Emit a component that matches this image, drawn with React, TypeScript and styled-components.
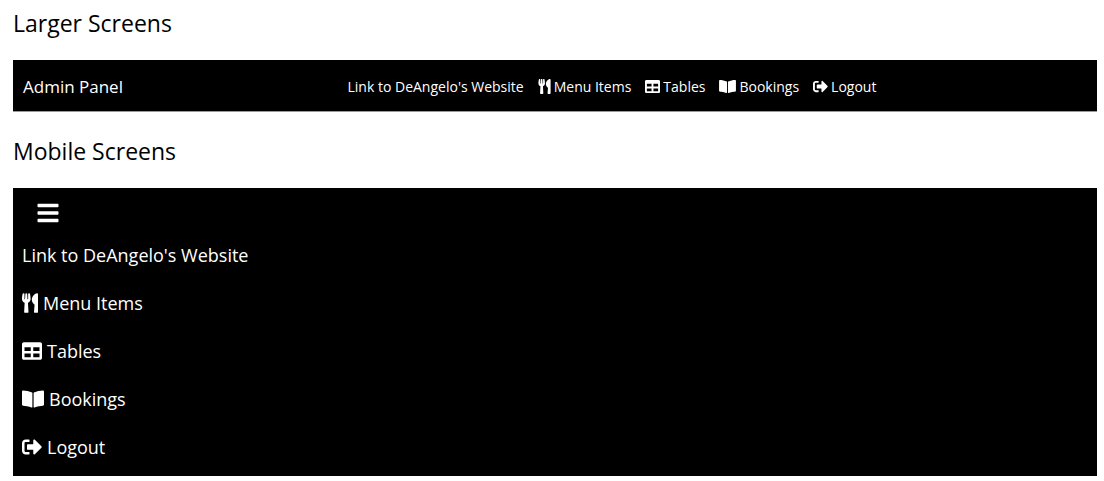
import React from "react";
import styled, { createGlobalStyle } from "styled-components";
import { FaBars, FaBookOpen, FaSignOutAlt, FaTable, FaUtensils } from "react-icons/fa";
import type { IconType } from "react-icons";

const GlobalStyle = createGlobalStyle`
  * { box-sizing: border-box; }
  body {
    margin: 0;
    background: #fff;
    color: #000;
    font-family: "Open Sans", "Noto Sans", sans-serif;
  }
`;

const Page = styled.main`
  padding: 8px 7px 5px 13px;
`;

const Heading = styled.h1`
  margin: 0 0 22px;
  font-size: 23px;
  line-height: 30px;
  font-weight: 400;
`;

const Bar = styled.nav`
  display: flex;
  align-items: center;
  min-height: 52px;
  margin-bottom: 24px;
  padding: 2px 0 0 10px;
  background: #000;
  border-bottom: 1px solid #999;
  color: #fff;
`;

const Brand = styled.a`
  color: #fff;
  font-size: 17px;
  line-height: 28px;
  text-decoration: none;
`;

const LinkRow = styled.ul`
  display: flex;
  flex: 1;
  flex-wrap: wrap;
  justify-content: center;
  gap: 14px;
  margin: 0;
  padding: 0 0 0 4px;
  list-style: none;
`;

const Drawer = styled.nav`
  padding: 10px 9px 15px;
  background: #000;
`;

const MenuButton = styled.button`
  display: flex;
  margin: 0 0 13px 11px;
  padding: 3px;
  border: 0;
  background: none;
  color: #fff;
  font-size: 24px;
  line-height: 24px;
`;

const LinkColumn = styled.ul`
  display: flex;
  flex-direction: column;
  gap: 20px;
  margin: 0;
  padding: 0;
  list-style: none;
`;

const NavLink = styled.a<{ $large?: boolean }>`
  display: flex;
  align-items: center;
  gap: ${(p) => (p.$large ? 5 : 3)}px;
  color: #fff;
  font-size: ${(p) => (p.$large ? 18 : 14)}px;
  line-height: ${(p) => (p.$large ? 28 : 20)}px;
  text-decoration: none;
  white-space: nowrap;
`;

type IconShape = "narrow" | "square" | "wide";

const iconWidths: Record<IconShape, { small: number; large: number }> = {
  narrow: { small: 13, large: 16 },
  square: { small: 15, large: 20 },
  wide: { small: 17, large: 22 },
};

const IconBox = styled.span<{ $shape: IconShape; $large?: boolean }>`
  display: flex;
  flex: none;
  width: ${(p) => iconWidths[p.$shape][p.$large ? "large" : "small"]}px;
  height: ${(p) => (p.$large ? 20 : 15)}px;

  svg {
    width: 100%;
    height: 100%;
  }
`;

const links: { label: string; icon?: IconType; shape?: IconShape }[] = [
  { label: "Link to DeAngelo's Website" },
  { label: "Menu Items", icon: FaUtensils, shape: "narrow" },
  { label: "Tables", icon: FaTable, shape: "square" },
  { label: "Bookings", icon: FaBookOpen, shape: "wide" },
  { label: "Logout", icon: FaSignOutAlt, shape: "square" },
];

function NavItems({ large }: { large?: boolean }) {
  return (
    <>
      {links.map(({ label, icon: Icon, shape = "square" }) => (
        <li key={label}>
          <NavLink href="#" $large={large}>
            {Icon && (
              <IconBox $shape={shape} $large={large}>
                <Icon aria-hidden />
              </IconBox>
            )}
            {label}
          </NavLink>
        </li>
      ))}
    </>
  );
}

export default function App() {
  return (
    <>
      <GlobalStyle />
      <Page>
        <Heading>Larger Screens</Heading>
        <Bar>
          <Brand href="#">Admin Panel</Brand>
          <LinkRow>
            <NavItems />
          </LinkRow>
        </Bar>
        <Heading>Mobile Screens</Heading>
        <Drawer>
          <MenuButton type="button" aria-label="Toggle menu">
            <FaBars aria-hidden />
          </MenuButton>
          <LinkColumn>
            <NavItems large />
          </LinkColumn>
        </Drawer>
      </Page>
    </>
  );
}
